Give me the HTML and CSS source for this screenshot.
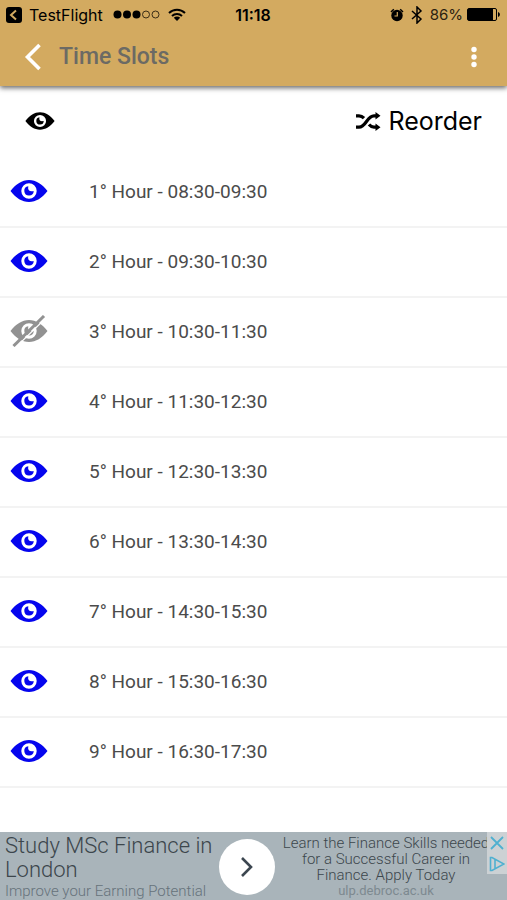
FILE: index.html
```html
<!DOCTYPE html>
<html lang="en">
<head>
<meta charset="utf-8">
<meta name="viewport" content="width=device-width, initial-scale=1">
<title>Time Slots</title>
<link rel="stylesheet" href="styles.css">
</head>
<body>
<svg class="sprite" aria-hidden="true">
  <symbol id="eye" viewBox="0 0 38 22">
    <path fill="currentColor" fill-rule="evenodd" d="M.5 11C6 4 12 0 19 0s13 4 18.500 11C32 18 26 22 19 22S6 18 .5 11zM19 3.300a7.700 7.700 0 1 0 0 15.400 7.700 7.700 0 0 0 0-15.400zM18.300 6.200c-.8 3.800 1 5.600 5.400 4.800A4.700 4.700 0 1 1 18.300 6.200z"/>
  </symbol>
  <symbol id="eye-off" viewBox="0 0 38 32">
    <path fill="currentColor" fill-rule="evenodd" d="M.5 16C6 9 12 5 19 5s13 4 18.500 11C32 23 26 27 19 27S6 23 .5 16zM19 8.300a7.700 7.700 0 1 0 0 15.400 7.700 7.700 0 0 0 0-15.400zM18.300 11.200c-.8 3.800 1 5.600 5.400 4.800A4.700 4.700 0 1 1 18.300 11.200z"/>
    <path d="M5.500 32.500 36 3" stroke="#fff" stroke-width="1.200"/>
    <path d="M3.500 31 34 1" stroke="currentColor" stroke-width="3"/>
  </symbol>
</svg>
<div class="app">
  <header class="header">
    <div class="status">
      <div class="status-left">
        <svg width="16" height="16" viewBox="0 0 16 16"><rect width="16" height="16" rx="3"/><path d="M10 3.500 5 8l5 4.500" fill="none" stroke="#d3aa60" stroke-width="2"/></svg>
        <span class="carrier">TestFlight</span>
        <svg class="signal" width="47" height="9" viewBox="0 0 47 9"><circle cx="4.500" cy="4.500" r="4"/><circle cx="14" cy="4.500" r="4"/><circle cx="23.500" cy="4.500" r="4"/><g fill="none" stroke="#3a2d15"><circle cx="33" cy="4.500" r="3.500"/><circle cx="42.500" cy="4.500" r="3.500"/></g></svg>
        <svg width="18" height="13" viewBox="0 0 18 13"><g fill="none" stroke="#000" stroke-width="2"><path d="M1 5a11.500 11.500 0 0 1 16 0M4 8a7.200 7.200 0 0 1 10 0"/></g><path d="M9 13 5.800 9.800a4.600 4.600 0 0 1 6.400 0z"/></svg>
      </div>
      <span class="clock">11:18</span>
      <div class="status-right">
        <svg width="14" height="14" viewBox="0 0 14 14"><circle cx="7" cy="7.500" r="5.700"/><path d="M1 4 3.800 1.300M10.200 1.300 13 4" stroke="#000" stroke-width="1.500"/><path d="M7.300 4v4H4.500" fill="none" stroke="#d3aa60" stroke-width="1.200"/></svg>
        <svg width="12" height="18" viewBox="0 0 12 18"><path d="m1 5 9 8-4 4V1l4 4-9 8" fill="none" stroke="#000" stroke-width="1.500"/></svg>
        <span class="percent">86%</span>
        <svg class="battery" width="33" height="13" viewBox="0 0 33 13"><rect x=".5" y=".5" width="29" height="12" rx="1.500" fill="none" stroke="#000"/><rect x="1" y="1" width="25" height="11"/><path d="M31 4c2.500 1 2.500 4 0 5z"/></svg>
      </div>
    </div>
    <div class="titlebar">
      <button class="icon-button back" aria-label="Back"><svg width="18" height="28" viewBox="0 0 18 28"><path d="M15.500 2 3.500 14l12 12" fill="none" stroke="#fff" stroke-width="3.600"/></svg></button>
      <h1 class="title">Time Slots</h1>
      <button class="icon-button more" aria-label="More options"><svg width="6" height="22" viewBox="0 0 6 22"><g fill="#fff"><circle cx="3" cy="3.500" r="2.700"/><circle cx="3" cy="11" r="2.700"/><circle cx="3" cy="18.500" r="2.700"/></g></svg></button>
    </div>
  </header>
  <main class="main">
    <div class="toolbar">
      <button class="icon-button" aria-label="Show all"><svg width="30" height="18"><use href="#eye"/></svg></button>
      <button class="reorder"><svg width="25" height="19" viewBox="0 0 25 19"><g fill="none" stroke="#000" stroke-width="3.200"><path d="M0 3.800h3c2 0 3.500.8 5 2.400M0 15.200h3C10 15.200 11 3.800 18 3.800h2M13 12.600c1.500 1.800 3 2.600 5 2.600h2"/></g><path d="m19.500 0 5 3.800-5 3.800zM19.500 11.400l5 3.800-5 3.800z"/></svg>Reorder</button>
    </div>
    <ul class="slots">
      <li class="slot"><button class="toggle" aria-label="Hide hour 1"><svg width="38" height="22"><use href="#eye"/></svg></button><span>1° Hour - 08:30-09:30</span></li>
      <li class="slot"><button class="toggle" aria-label="Hide hour 2"><svg width="38" height="22"><use href="#eye"/></svg></button><span>2° Hour - 09:30-10:30</span></li>
      <li class="slot"><button class="toggle toggle-off" aria-label="Show hour 3"><svg width="38" height="32"><use href="#eye-off"/></svg></button><span>3° Hour - 10:30-11:30</span></li>
      <li class="slot"><button class="toggle" aria-label="Hide hour 4"><svg width="38" height="22"><use href="#eye"/></svg></button><span>4° Hour - 11:30-12:30</span></li>
      <li class="slot"><button class="toggle" aria-label="Hide hour 5"><svg width="38" height="22"><use href="#eye"/></svg></button><span>5° Hour - 12:30-13:30</span></li>
      <li class="slot"><button class="toggle" aria-label="Hide hour 6"><svg width="38" height="22"><use href="#eye"/></svg></button><span>6° Hour - 13:30-14:30</span></li>
      <li class="slot"><button class="toggle" aria-label="Hide hour 7"><svg width="38" height="22"><use href="#eye"/></svg></button><span>7° Hour - 14:30-15:30</span></li>
      <li class="slot"><button class="toggle" aria-label="Hide hour 8"><svg width="38" height="22"><use href="#eye"/></svg></button><span>8° Hour - 15:30-16:30</span></li>
      <li class="slot"><button class="toggle" aria-label="Hide hour 9"><svg width="38" height="22"><use href="#eye"/></svg></button><span>9° Hour - 16:30-17:30</span></li>
    </ul>
  </main>
  <aside class="ad">
    <div class="ad-main">
      <p class="ad-headline">Study MSc Finance in London</p>
      <p class="ad-sub">Improve your Earning Potential</p>
    </div>
    <button class="ad-go" aria-label="Open ad"><svg width="14" height="22" viewBox="0 0 14 22"><path d="m2 2 9 9-9 9" fill="none" stroke="#3c4650" stroke-width="2.600"/></svg></button>
    <div class="ad-copy">
      <p class="ad-text">Learn the Finance Skills needed for a Successful Career in Finance. Apply Today</p>
      <p class="ad-url">ulp.debroc.ac.uk</p>
    </div>
    <div class="ad-controls">
      <button class="ad-control" aria-label="Close ad"><svg width="14" height="14" viewBox="0 0 14 14"><path d="m1 1 12 12M13 1 1 13" stroke="#4fb0d0" stroke-width="1.800"/></svg></button>
      <button class="ad-control" aria-label="Ad choices"><svg width="16" height="16" viewBox="0 0 16 16"><path d="M1.500 1.500v13H3L15 8 3 1.500zM6 3.500v9" fill="none" stroke="#4fb0d0" stroke-width="1.600"/></svg></button>
    </div>
  </aside>
</div>
</body>
</html>
```
FILE: styles.css
```css
* {
  box-sizing: border-box;
}

body {
  margin: 0;
  background: #fff;
  color: #000;
  font-family: Roboto, "Liberation Sans", sans-serif;
}

h1,
p,
ul {
  margin: 0;
  padding: 0;
}

button {
  padding: 0;
  border: 0;
  background: none;
  color: inherit;
  font: inherit;
  cursor: pointer;
}

svg {
  display: block;
  flex: none;
}

.sprite {
  position: absolute;
  width: 0;
  height: 0;
}

.app {
  display: flex;
  flex-direction: column;
  min-height: 100vh;
}

.header {
  background: #d3aa60;
  box-shadow: 0 2px 5px rgba(0, 0, 0, 0.6);
}

.status {
  display: grid;
  grid-template-columns: 1fr auto 1fr;
  align-items: center;
  height: 29px;
  padding: 0 7px 0 6px;
  font-family: Inter, sans-serif;
  font-size: 16px;
}

.status-left,
.status-right {
  display: flex;
  align-items: center;
}

.status-left {
  gap: 7px;
}

.status-right {
  justify-content: flex-end;
  gap: 7px;
}

.signal {
  margin: 0 1px 0 3px;
}

.clock {
  font-weight: 600;
}

.percent {
  color: #2a2110;
  font-size: 15px;
}

.battery {
  margin-left: -3px;
}

.titlebar {
  display: flex;
  align-items: center;
  height: 57px;
  padding: 0 30px 2px 24px;
}

.title {
  flex: 1;
  margin-left: 17px;
  color: #6c6a64;
  font-size: 23px;
  font-weight: 500;
  line-height: 28px;
}

.main {
  flex: 1;
}

.toolbar {
  display: flex;
  align-items: center;
  justify-content: space-between;
  height: 70px;
  padding: 0 25px;
}

.reorder {
  display: flex;
  align-items: center;
  gap: 7px;
  font-family: Inter, sans-serif;
  font-size: 25px;
}

.slots {
  list-style: none;
}

.slot {
  display: flex;
  align-items: center;
  gap: 41px;
  height: 70px;
  padding: 0 10px;
  color: #4b4b4b;
  font-size: 19px;
}

.slots {
  padding-bottom: 2px;
}

.slot {
  box-shadow: 0 2px #f3f3f3;
}

.toggle {
  color: #0505ee;
}

.toggle-off {
  color: #929292;
}

.ad {
  position: relative;
  display: grid;
  grid-template-columns: 214px 56px 1fr;
  align-items: start;
  height: 68px;
  padding-left: 5px;
  overflow: hidden;
  background: #a9b4ba;
  color: #3c464c;
}

.ad-headline {
  padding-top: 2px;
  font-size: 22px;
  font-weight: 300;
  line-height: 24px;
}

.ad-sub {
  color: #66727a;
  font-size: 15px;
  font-weight: 300;
  line-height: 18px;
}

.ad-go {
  display: grid;
  place-items: center;
  width: 56px;
  height: 56px;
  margin-top: 7px;
  border-radius: 50%;
  background: #fff;
}

.ad-copy {
  padding: 3px 10px 0 0;
  text-align: center;
}

.ad-text {
  font-size: 15px;
  font-weight: 300;
  line-height: 16px;
}

.ad-url {
  color: #7d8990;
  font-size: 13px;
  line-height: 16px;
}

.ad-controls {
  position: absolute;
  top: 0;
  right: 0;
}

.ad-control {
  display: grid;
  place-items: center;
  width: 20px;
  height: 21px;
  background: #ccd1d4;
}
```
